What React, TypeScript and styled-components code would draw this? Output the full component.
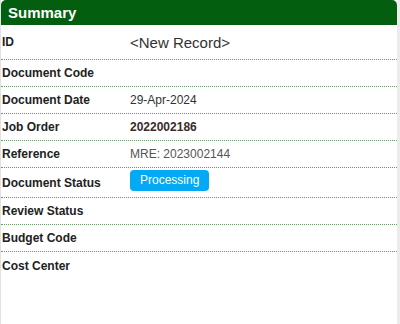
import React from 'react';
import styled, {createGlobalStyle} from "styled-components";

const GlobalStyle = createGlobalStyle`
    html, body {
        margin: 0;
        padding: 0;
        background: #ffffff;
        font-family: "Liberation Sans", Arial, sans-serif;
    }
`

type Row = {
    label: string;
    value?: string;
    kind?: 'big' | 'bold' | 'plain' | 'muted' | 'badge';
    height?: number;
}

const rows: Row[] = [
    {label: 'ID', value: '<New Record>', kind: 'big', height: 34},
    {label: 'Document Code', height: 26},
    {label: 'Document Date', value: '29-Apr-2024', kind: 'plain', height: 26},
    {label: 'Job Order', value: '2022002186', kind: 'bold', height: 26},
    {label: 'Reference', value: 'MRE: 2023002144', kind: 'muted', height: 26},
    {label: 'Document Status', value: 'Processing', kind: 'badge', height: 29},
    {label: 'Review Status', height: 26},
    {label: 'Budget Code', height: 26},
]

export default function App() {
    return (
        <>
            <GlobalStyle/>
            <Panel>
                <Header>Summary</Header>
                <List>
                    {rows.map(row => (
                        <FieldRow key={row.label} $height={row.height ?? 26}>
                            <Label>{row.label}</Label>
                            {row.kind === 'badge'
                                ? <Badge>{row.value}</Badge>
                                : <Value $kind={row.kind ?? 'plain'}>{row.value}</Value>}
                        </FieldRow>
                    ))}
                    <LastRow>
                        <Label>Cost Center</Label>
                    </LastRow>
                </List>
            </Panel>
        </>
    );
}

const Panel = styled.section`
    width: 400px;
    height: 324px;
    box-sizing: border-box;
    border-left: 1px solid #e2e2e2;
    border-right: 3px solid #ececec;
    display: flex;
    flex-direction: column;
    overflow: hidden;
`
const Header = styled.h2`
    margin: 0;
    height: 25px;
    background: #035e10;
    color: #ffffff;
    font-size: 15px;
    font-weight: bold;
    line-height: 25px;
    padding-left: 7px;
    border-radius: 5px 5px 0 0;
`
const List = styled.div`
    display: flex;
    flex-direction: column;
`
const FieldRow = styled.div<{ $height: number }>`
    display: grid;
    grid-template-columns: 128px 1fr;
    align-items: center;
    height: ${p => p.$height}px;
    border-bottom: 1px dotted #5f9f5f;
    padding-left: 1px;
`
const LastRow = styled(FieldRow).attrs({$height: 28})`
    border-bottom: none;
`
const Label = styled.div`
    font-size: 12px;
    font-weight: bold;
    color: #222222;
`
const Value = styled.div<{ $kind: string }>`
    font-size: ${p => p.$kind === 'big' ? '15px' : '12px'};
    font-weight: ${p => p.$kind === 'bold' ? 'bold' : 'normal'};
    color: ${p => p.$kind === 'muted' ? '#555555' : p.$kind === 'bold' ? '#3a2a2a' : '#333333'};
`
const Badge = styled.span`
    justify-self: start;
    background: #03a9f4;
    color: #ffffff;
    font-size: 12px;
    padding: 3px 10px 4px;
    border-radius: 4px;
    margin-top: -4px;
`
